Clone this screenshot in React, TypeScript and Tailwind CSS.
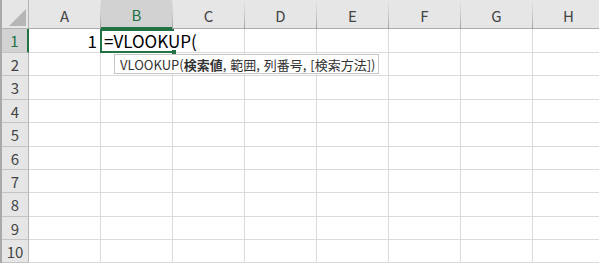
import React from 'react';

const cols = ['A', 'B', 'C', 'D', 'E', 'F', 'G', 'H'];
const rowHeights = [
  'h-[24px]',
  'h-[23px]',
  'h-[24px]',
  'h-[23px]',
  'h-[24px]',
  'h-[23px]',
  'h-[23px]',
  'h-[24px]',
  'h-[23px]',
  'h-[23px]',
];

const font = { fontFamily: '"Noto Sans CJK JP", "Noto Sans", sans-serif' };

export default function App() {
  return (
    <div className="relative w-[599px] h-[263px] overflow-hidden bg-white text-[#222]" style={font}>
      <div className="flex flex-col w-max border-l-2 border-[#a9a9a9]">
        {/* Column header row */}
        <div className="flex h-[29px]">
          <div className="relative w-[27px] h-full bg-[#e6e6e6] border-r border-b border-[#b4b4b4]">
            <svg width="26" height="28" viewBox="0 0 26 28" className="absolute left-0 top-0">
              <polygon points="24,9 24,26 7,26" fill="#b6b6b6" />
            </svg>
          </div>
          {cols.map((c) => {
            const sel = c === 'B';
            return (
              <div key={c} className="flex w-[72px] h-full">
                <div
                  className={
                    sel
                      ? 'flex-1 flex items-center justify-center pt-[2px] bg-[#d2d2d2] text-[#217346] text-[15px] leading-none border-b-2 border-[#217346]'
                      : 'flex-1 flex items-center justify-center pt-[2px] bg-[#e6e6e6] text-[#444] text-[15px] leading-none border-b border-[#ababab]'
                  }
                >
                  {c}
                </div>
                <div className="w-px h-full bg-linear-to-b from-[#e6e6e6] via-[#cdcdcd] to-[#9f9f9f]" />
              </div>
            );
          })}
        </div>
        {/* Rows */}
        {rowHeights.map((h, i) => {
          const r = i + 1;
          const sel = r === 1;
          return (
            <div key={r} className={'flex ' + h}>
              <div
                className={
                  sel
                    ? 'w-[27px] h-full flex items-center justify-center bg-[#d2d2d2] text-[#217346] text-[15px] leading-none border-r-2 border-r-[#217346] border-b border-b-[#c4c4c4]'
                    : 'w-[27px] h-full flex items-center justify-center bg-[#e6e6e6] text-[#444] text-[15px] leading-none border-r border-r-[#b4b4b4] border-b border-b-[#c4c4c4]'
                }
              >
                {r}
              </div>
              {cols.map((c) => (
                <div
                  key={c}
                  className="w-[72px] h-full flex items-center justify-end pr-[3px] border-r border-b border-[#dadada] text-[17px] leading-none text-black"
                >
                  {r === 1 && c === 'A' ? '1' : ''}
                </div>
              ))}
            </div>
          );
        })}
      </div>

      {/* Active cell border (B1) */}
      <div className="absolute left-[100px] top-[29px] w-[74px] h-[24px] border-2 border-[#217346]" />
      {/* Fill handle */}
      <div className="absolute left-[172px] top-[50px] w-[4px] h-[4px] bg-[#217346]" />
      {/* In-cell editor */}
      <div className="absolute left-[102px] top-[31px] w-[90px] h-[19px] bg-white flex items-center">
        <span className="pl-[2px] text-[17px] leading-[17px] text-black whitespace-nowrap">=VLOOKUP(</span>
        <span className="ml-[2px] w-px h-[16px] bg-[#555]" />
      </div>

      {/* Function tooltip */}
      <div className="absolute left-[114px] top-[54px] w-[265px] h-[20px] bg-white border border-[#c6c6c6] flex items-center pl-[5px] text-[13px] leading-none text-[#333] whitespace-nowrap [word-spacing:1px]">
        VLOOKUP(<span className="font-bold">検索値</span>, 範囲, 列番号, [検索方法])
      </div>
    </div>
  );
}
